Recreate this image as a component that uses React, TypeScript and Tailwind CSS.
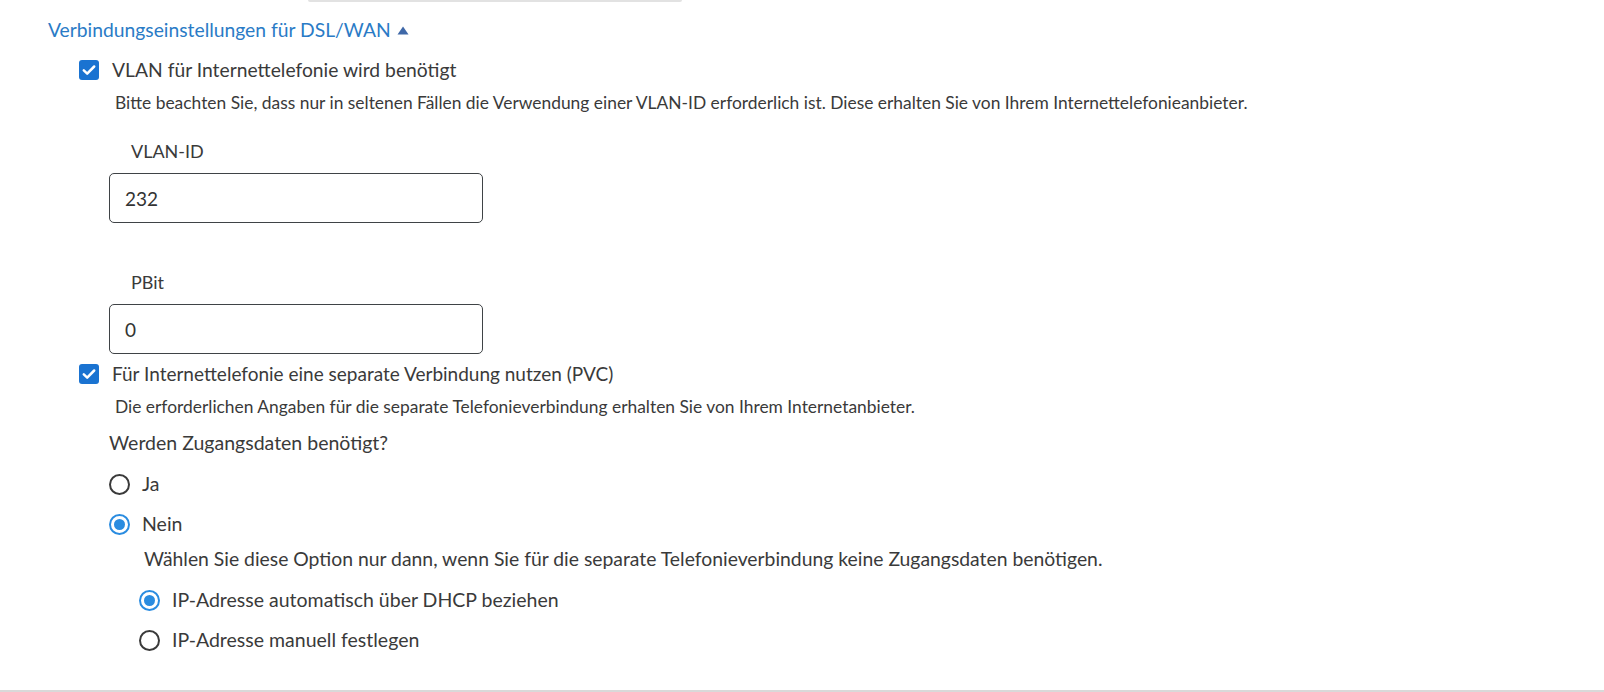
import type { ReactNode } from 'react'

const font = { fontFamily: 'Lato, "Noto Sans", sans-serif' }

function Checkbox() {
  return (
    <span className="flex h-[20px] w-[20px] shrink-0 items-center justify-center rounded-[3px] bg-[#1a73d1]">
      <svg width="14" height="14" viewBox="0 0 14 14" fill="none">
        <path d="M1.8 7.4l3.4 3.2L12.2 3.5" stroke="#fff" strokeWidth="2.5" strokeLinecap="round" strokeLinejoin="round" />
      </svg>
    </span>
  )
}

function Radio({ checked }: { checked?: boolean }) {
  return checked ? (
    <span className="flex h-[21px] w-[21px] shrink-0 items-center justify-center rounded-full border-2 border-[#2a8ce0]">
      <span className="h-[11px] w-[11px] rounded-full bg-[#2a8ce0]" />
    </span>
  ) : (
    <span className="h-[21px] w-[21px] shrink-0 rounded-full border-2 border-[#3a3a3a]" />
  )
}

function Option({ control, children, className }: { control: ReactNode; children: ReactNode; className: string }) {
  return (
    <label className={`flex h-[24px] items-center gap-[12px] text-[#3a3a3a] ${className}`}>
      {control}
      <span>{children}</span>
    </label>
  )
}

function Field({ label, value, className }: { label: string; value: string; className: string }) {
  return (
    <div className={className}>
      <p className="ml-[22px] h-[24px] text-[18px] leading-[24px] text-[#3a3a3a]">{label}</p>
      <input
        readOnly
        value={value}
        className="mt-[10px] h-[50px] w-[374px] rounded-[5px] border border-[#3f4346] px-[15px] text-[19px] text-[#333] outline-none"
        style={font}
      />
    </div>
  )
}

export default function App() {
  return (
    <div className="relative h-[692px] w-full overflow-hidden bg-white" style={font}>
      <div className="ml-[308px] h-[2px] w-[374px] rounded-b bg-[#e2e2e2]" />

      <div className="pl-[48px]">
        <button className="mt-[16px] flex h-[24px] items-center gap-[6px] text-[19.3px] text-[#2a7bc6]">
          Verbindungseinstellungen für DSL/WAN
          <svg width="12" height="9" viewBox="0 0 12 9">
            <path d="M6 0.5L11.5 8.5H0.5z" fill="#3f68a8" />
          </svg>
        </button>

        <div className="pl-[31px]">
          <Option control={<Checkbox />} className="mt-[16px] gap-[13px] text-[19.3px]">
            VLAN für Internettelefonie wird benötigt
          </Option>
          <p className="mt-[10px] ml-[36px] h-[22px] text-[17.4px] leading-[22px] text-[#3a3a3a]">
            Bitte beachten Sie, dass nur in seltenen Fällen die Verwendung einer VLAN-ID erforderlich ist. Diese erhalten Sie von Ihrem Internettelefonieanbieter.
          </p>

          <div className="ml-[30px]">
            <Field label="VLAN-ID" value="232" className="mt-[25px] flex flex-col" />
            <Field label="PBit" value="0" className="mt-[47px] flex flex-col" />
          </div>

          <Option control={<Checkbox />} className="mt-[8px] gap-[13px] text-[19px]">
            Für Internettelefonie eine separate Verbindung nutzen (PVC)
          </Option>
          <p className="mt-[10px] ml-[36px] h-[22px] text-[17.4px] leading-[22px] text-[#3a3a3a]">
            Die erforderlichen Angaben für die separate Telefonieverbindung erhalten Sie von Ihrem Internetanbieter.
          </p>

          <div className="ml-[30px]">
            <p className="mt-[13px] h-[24px] text-[19.5px] leading-[24px] text-[#3a3a3a]">Werden Zugangsdaten benötigt?</p>
            <Option control={<Radio />} className="mt-[17px] text-[19.5px]">Ja</Option>
            <Option control={<Radio checked />} className="mt-[16px] text-[19.5px]">Nein</Option>

            <p className="mt-[11px] ml-[35px] h-[24px] text-[19.35px] leading-[24px] text-[#3a3a3a]">
              Wählen Sie diese Option nur dann, wenn Sie für die separate Telefonieverbindung keine Zugangsdaten benötigen.
            </p>

            <div className="ml-[30px]">
              <Option control={<Radio checked />} className="mt-[17px] text-[19.5px]">IP-Adresse automatisch über DHCP beziehen</Option>
              <Option control={<Radio />} className="mt-[16px] text-[19.5px]">IP-Adresse manuell festlegen</Option>
            </div>
          </div>
        </div>
      </div>

      <div className="absolute bottom-0 left-0 h-[2px] w-full bg-[#d9d9d9]" />
    </div>
  )
}
